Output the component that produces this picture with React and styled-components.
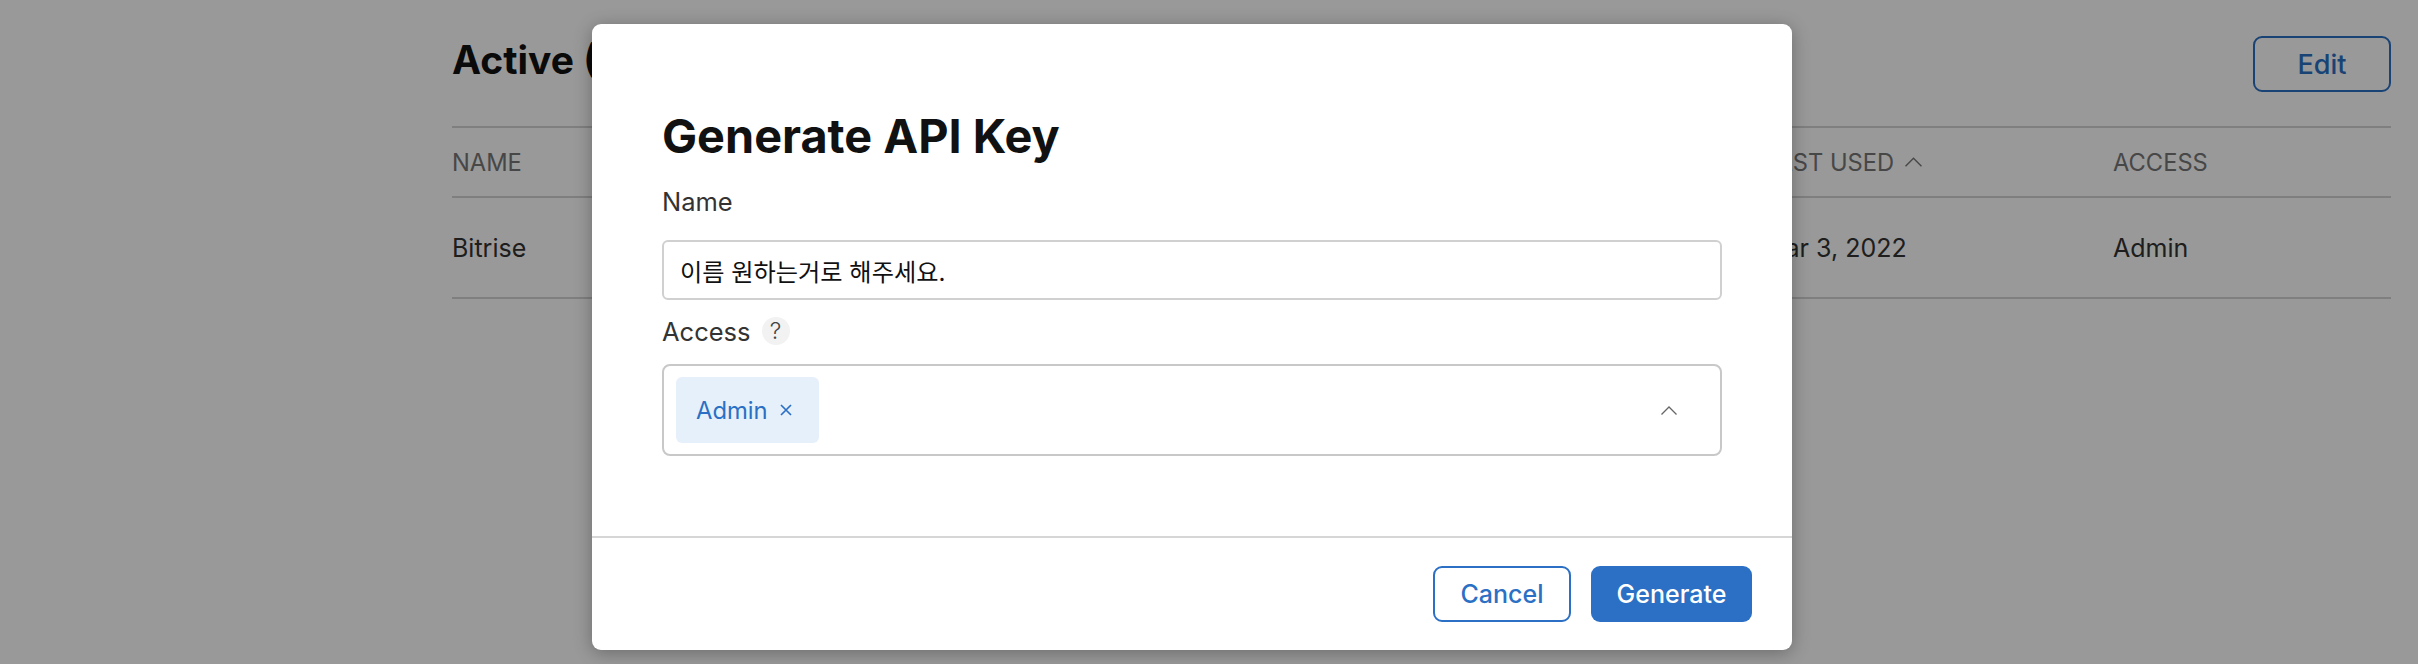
import React from 'react';
import styled, { createGlobalStyle } from 'styled-components';

const Global = createGlobalStyle`
  html, body {
    margin: 0;
    padding: 0;
    background: #fff;
    overflow: hidden;
  }
  * { box-sizing: border-box; }
`;

const FONT = `Inter, "Noto Sans CJK KR", sans-serif`;

const Page = styled.div`
  position: relative;
  width: 2418px;
  height: 664px;
  overflow: hidden;
  font-family: ${FONT};
  color: #222;
  padding: 0 27px 0 452px;
`;
const TitleRow = styled.div`
  height: 126px;
  display: flex;
  justify-content: space-between;
  align-items: flex-start;
`;
const SectionTitle = styled.h2`
  margin: 36px 0 0;
  font-size: 39px;
  line-height: 48px;
  font-weight: 700;
  color: #111;
`;
const EditButton = styled.button`
  margin-top: 36px;
  width: 138px;
  height: 56px;
  background: #fff;
  border: 2.5px solid #2b70c4;
  border-radius: 9px;
  color: #2b70c4;
  font: 500 27px ${FONT};
`;
const Row = styled.div`
  display: grid;
  grid-template-columns: 1311px 350px 1fr;
  align-items: center;
  height: ${p => p.$h}px;
  border-top: 2px solid #d4d4d4;
  border-bottom: ${p => (p.$last ? '2px solid #d4d4d4' : 'none')};
  font-size: ${p => (p.$head ? 23.7 : 25)}px;
  color: ${p => (p.$head ? '#777' : '#333')};
`;
const HeadCell = styled.span`
  display: flex;
  align-items: center;
  gap: 11px;
`;
const Overlay = styled.div`
  position: absolute;
  inset: 0;
  background: rgba(0, 0, 0, 0.4);
  padding: 24px 0 0 592px;
`;
const Modal = styled.div`
  width: 1200px;
  height: 626px;
  background: #fff;
  border-radius: 9px;
  box-shadow: 0 3px 18px rgba(0, 0, 0, 0.3);
  display: flex;
  flex-direction: column;
`;
const Body = styled.div`
  flex: 1;
  padding: 0 70px;
`;
const ModalTitle = styled.h1`
  margin: 83px 0 0;
  font-size: 46.8px;
  line-height: 58px;
  font-weight: 700;
  color: #111;
`;
const Label = styled.div`
  display: flex;
  align-items: center;
  gap: 11px;
  height: 30px;
  margin-top: ${p => p.$top}px;
  font-size: 25.5px;
  color: #333;
`;
const Help = styled.span`
  width: 28px;
  height: 28px;
  border-radius: 50%;
  background: #f2f2f2;
  color: #444;
  font-size: 23px;
  font-weight: 300;
  display: flex;
  align-items: center;
  justify-content: center;
`;
const NameInput = styled.div`
  margin-top: 24px;
  height: 60px;
  border: 2px solid #d0d0d0;
  border-radius: 6px;
  padding: 0 16px;
  display: flex;
  align-items: center;
  font-size: 24.2px;
  color: #111;
`;
const Select = styled.div`
  margin-top: 18px;
  height: 92px;
  border: 2px solid #c8c8c8;
  border-radius: 8px;
  padding: 0 43px 0 12px;
  display: flex;
  align-items: center;
  justify-content: space-between;
`;
const Chip = styled.div`
  width: 143px;
  height: 66px;
  background: #e6f0fb;
  border-radius: 6px;
  padding-left: 20px;
  display: flex;
  align-items: center;
  gap: 12px;
  color: #2b70c4;
  font-size: 23.8px;
`;
const Footer = styled.div`
  height: 114px;
  border-top: 2px solid #d6d6d6;
  padding: 28px 40px 0 0;
  display: flex;
  justify-content: flex-end;
  gap: 20px;
`;
const Button = styled.button`
  width: ${p => p.$w}px;
  height: 56px;
  border: ${p => (p.$primary ? 0 : '2.5px solid #2b70c4')};
  border-radius: 9px;
  background: ${p => (p.$primary ? '#2b70c4' : '#fff')};
  color: ${p => (p.$primary ? '#fff' : '#2b70c4')};
  font: 500 25px ${FONT};
  padding: 0;
`;

const Chevron = ({ w = 16, h = 9, color = '#666' }) => (
  <svg width={w} height={h} viewBox="0 0 16 9" fill="none" stroke={color} strokeWidth="1.3">
    <path d="M0.5 8.5L8 1L15.5 8.5" />
  </svg>
);

const Close = () => (
  <svg width="12" height="12" viewBox="0 0 12 12" fill="none" stroke="#2b70c4" strokeWidth="1.7">
    <path d="M1 1L11 11M11 1L1 11" />
  </svg>
);

export default function App() {
  return (
    <>
      <Global />
      <Page>
        <TitleRow>
          <SectionTitle>Active (1)</SectionTitle>
          <EditButton>Edit</EditButton>
        </TitleRow>
        <Row $h={70} $head>
          <span>NAME</span>
          <HeadCell>
            LAST USED <Chevron w={17} h={10} color="#777" />
          </HeadCell>
          <span>ACCESS</span>
        </Row>
        <Row $h={103} $last>
          <span>Bitrise</span>
          <span>Mar 3, 2022</span>
          <span>Admin</span>
        </Row>
        <Overlay>
          <Modal>
            <Body>
              <ModalTitle>Generate API Key</ModalTitle>
              <Label $top={21}>Name</Label>
              <NameInput>이름 원하는거로 해주세요.</NameInput>
              <Label $top={16}>
                Access <Help>?</Help>
              </Label>
              <Select>
                <Chip>
                  Admin <Close />
                </Chip>
                <Chevron />
              </Select>
            </Body>
            <Footer>
              <Button $w={138}>Cancel</Button>
              <Button $w={161} $primary>Generate</Button>
            </Footer>
          </Modal>
        </Overlay>
      </Page>
    </>
  );
}
